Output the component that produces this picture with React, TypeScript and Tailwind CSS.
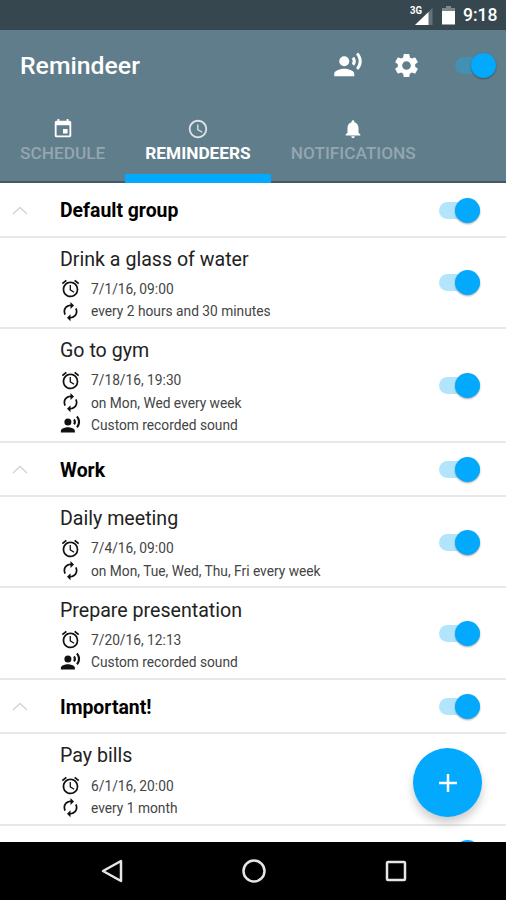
import { useState } from "react";
import type { IconType } from "react-icons";
import {
  MdAccessTime,
  MdAlarm,
  MdAutorenew,
  MdEvent,
  MdNotifications,
  MdRecordVoiceOver,
  MdSettings,
} from "react-icons/md";

interface Detail {
  kind: "time" | "repeat" | "sound";
  text: string;
}

interface Reminder {
  title: string;
  details: Detail[];
}

interface Group {
  name: string;
  reminders: Reminder[];
}

const groups: Group[] = [
  {
    name: "Default group",
    reminders: [
      {
        title: "Drink a glass of water",
        details: [
          { kind: "time", text: "7/1/16, 09:00" },
          { kind: "repeat", text: "every 2 hours and 30 minutes" },
        ],
      },
      {
        title: "Go to gym",
        details: [
          { kind: "time", text: "7/18/16, 19:30" },
          { kind: "repeat", text: "on Mon, Wed every week" },
          { kind: "sound", text: "Custom recorded sound" },
        ],
      },
    ],
  },
  {
    name: "Work",
    reminders: [
      {
        title: "Daily meeting",
        details: [
          { kind: "time", text: "7/4/16, 09:00" },
          { kind: "repeat", text: "on Mon, Tue, Wed, Thu, Fri every week" },
        ],
      },
      {
        title: "Prepare presentation",
        details: [
          { kind: "time", text: "7/20/16, 12:13" },
          { kind: "sound", text: "Custom recorded sound" },
        ],
      },
    ],
  },
  {
    name: "Important!",
    reminders: [
      {
        title: "Pay bills",
        details: [
          { kind: "time", text: "6/1/16, 20:00" },
          { kind: "repeat", text: "every 1 month" },
        ],
      },
    ],
  },
];

const detailIcons: Record<Detail["kind"], IconType> = {
  time: MdAlarm,
  repeat: MdAutorenew,
  sound: MdRecordVoiceOver,
};

function Toggle({ dark = false }: { dark?: boolean }) {
  const [on, setOn] = useState(true);

  return (
    <button
      type="button"
      role="switch"
      aria-checked={on}
      onClick={() => setOn(!on)}
      className={`flex h-[17px] w-[41px] shrink-0 items-center rounded-full ${
        on ? "justify-end" : "justify-start"
      } ${dark ? "bg-[#4490b3]" : "bg-[#b2e5fc]"}`}
    >
      <span className="size-[25px] rounded-full bg-[#02a9fd] shadow-[0_1px_2px_rgba(0,0,0,0.35)]" />
    </button>
  );
}

function StatusBar() {
  return (
    <div className="flex h-[30px] shrink-0 items-center justify-end bg-[#37474f] pt-[1px] pr-[8px] text-white">
      <svg className="h-[20px] w-[24px]" viewBox="0 0 24 20">
        <path d="M22.500 2v17H5z" fill="#63717a" />
        <path d="M18.500 6V19H5z" fill="#fff" />
        <text x="0" y="8" fontSize="10" fontWeight="700" fill="#fff" textLength="12" lengthAdjust="spacingAndGlyphs">
          3G
        </text>
      </svg>
      <svg className="ml-[8px] h-[18.500px] w-[13px]" viewBox="0 0 13 18.500">
        <path d="M4 0h5v2h4v3H0V2h4z" fill="#7c888e" />
        <path d="M0 5h13v13.500H0z" fill="#fff" />
      </svg>
      <span className="ml-[8px] w-[35px] text-[17.500px] font-medium leading-none">9:18</span>
    </div>
  );
}

function Tab({ icon: Icon, label, active = false }: { icon: IconType; label: string; active?: boolean }) {
  return (
    <button
      type="button"
      className={`flex h-[70px] flex-col items-center px-5 pt-[5px] leading-5 ${
        active
          ? "border-b-9 border-[#02a9fd] text-[17.250px] font-bold text-white"
          : "text-[17.250px] font-medium text-[#94a6af]"
      }`}
    >
      <Icon className={`size-[22px] ${active ? "text-[#dce2e5]" : "text-white"}`} />
      <span className="mt-[3px] whitespace-nowrap">{label}</span>
    </button>
  );
}

function ReminderRow({ reminder }: { reminder: Reminder }) {
  return (
    <div className="flex items-center justify-between border-b-2 border-[#e8e8e8] pr-[26px] pl-[60px]">
      <div className="pt-[10.200px] pb-[3.700px]">
        <h3 className="mb-[6.900px] text-[19.600px] leading-[24px] text-[#222]">{reminder.title}</h3>
        {reminder.details.map((detail) => {
          const Icon = detailIcons[detail.kind];
          return (
            <div key={detail.kind} className="flex h-[22.300px] items-center gap-[10px]">
              <Icon className="mb-[2px] size-[21px] text-[#111]" />
              <span className="text-[13.750px] leading-none text-[#444]">{detail.text}</span>
            </div>
          );
        })}
      </div>
      <div className="pt-[1px]">
        <Toggle />
      </div>
    </div>
  );
}

function GroupHeader({ name }: { name: string }) {
  return (
    <div className="flex h-[54.500px] shrink-0 items-center border-b-2 border-[#e8e8e8] pt-[1.500px] pr-[26px] pl-[12px]">
      <svg className="h-[9px] w-[16px]" viewBox="0 0 16 9">
        <path d="M1 8l7-6.500L15 8" fill="none" stroke="#d4d4d4" strokeWidth="1.500" />
      </svg>
      <h2 className="ml-8 flex-1 pt-[2px] text-[19.400px] font-bold text-black">{name}</h2>
      <Toggle />
    </div>
  );
}

export default function App() {
  return (
    <div className="relative flex h-[900px] w-[506px] flex-col overflow-hidden bg-white font-[Roboto,sans-serif]">
      <StatusBar />
      <header className="flex h-[153px] shrink-0 flex-col justify-between border-b-2 border-[#455a64] bg-[#607d8b] text-white">
        <div className="flex h-[70px] items-center pr-[10px] pl-5">
          <h1 className="flex-1 pt-[2px] text-[24.800px] font-medium">Remindeer</h1>
          <MdRecordVoiceOver className="mr-[1px] size-[30px]" />
          <MdSettings className="ml-[28px] size-[29px]" />
          <div className="ml-[34px]">
            <Toggle dark />
          </div>
        </div>
        <nav className="-mb-[2px] flex">
          <Tab icon={MdEvent} label="SCHEDULE" />
          <Tab icon={MdAccessTime} label="REMINDEERS" active />
          <Tab icon={MdNotifications} label="NOTIFICATIONS" />
        </nav>
      </header>

      <main className="min-h-0 flex-1 overflow-hidden">
        {groups.map((group) => (
          <section key={group.name}>
            <GroupHeader name={group.name} />
            {group.reminders.map((reminder) => (
              <ReminderRow key={reminder.title} reminder={reminder} />
            ))}
          </section>
        ))}
        <GroupHeader name="" />
      </main>

      <button
        type="button"
        aria-label="Add"
        className="absolute right-[24px] bottom-[83px] flex size-[69px] items-center justify-center rounded-full bg-[#02a9fd] shadow-[0_6px_10px_rgba(0,0,0,0.2)]"
      >
        <svg className="size-[18px]" viewBox="0 0 18 18">
          <path d="M9 0v18M0 9h18" stroke="#fff" strokeWidth="2.500" />
        </svg>
      </button>

      <footer className="flex h-[58px] shrink-0 items-center justify-center gap-[118px] bg-black pl-[2px]">
        <svg className="size-6" viewBox="0 0 24 24" fill="none" stroke="#e6e6e6" strokeWidth="2.500">
          <path d="M21 2v20L3 12z" strokeLinejoin="round" />
        </svg>
        <svg className="size-6" viewBox="0 0 24 24" fill="none" stroke="#e6e6e6" strokeWidth="2.500">
          <circle cx="12" cy="12" r="10.500" />
        </svg>
        <svg className="size-6" viewBox="0 0 24 24" fill="none" stroke="#e6e6e6" strokeWidth="2.500">
          <rect x="3" y="3" width="18" height="18" rx="1" />
        </svg>
      </footer>
    </div>
  );
}
